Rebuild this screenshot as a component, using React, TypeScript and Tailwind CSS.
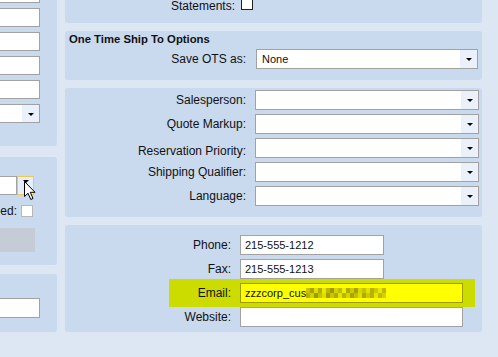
import React from "react";

const panel = "bg-[#c9d9ee] rounded-[3px]";
const field = "h-[20px] bg-white border border-[#a2a2a2]";

function Arrow() {
  return (
    <span className="w-0 h-0 mt-[1px] border-l-[3px] border-r-[3px] border-t-[3px] border-l-transparent border-r-transparent border-t-black" />
  );
}

function Select({ value = "", width }: { value?: string; width: string }) {
  return (
    <div className={`${field} ${width} flex items-stretch`}>
      <span className="flex-1 pl-[5px] text-[11px] leading-[18px]">{value}</span>
      <span className="w-[17px] bg-[#eaf1fb] flex items-center justify-center">
        <Arrow />
      </span>
    </div>
  );
}

function Row({ label, low, children }: { label: string; low?: boolean; children: React.ReactNode }) {
  return (
    <div className="flex items-center h-[20px]">
      <span className={`w-[181px] text-right whitespace-nowrap ${low ? "mt-[6px]" : ""}`}>{label}</span>
      <div className="ml-[9px]">{children}</div>
    </div>
  );
}

function Contact({ label, value = "", width }: { label: string; value?: string; width: string }) {
  return (
    <div className="flex items-center h-[20px]">
      <span className="w-[166px] text-right">{label}</span>
      <div className={`${field} ${width} ml-[9px] pl-[4px] text-[11px] leading-[18px]`}>{value}</div>
    </div>
  );
}

// mosaic used to hide part of the email address
const blurTop = ["#c9c400", "#a9a500", "#dede00", "#b3ae00", "#e8e800", "#bdb800", "#9f9b00", "#d7d200", "#c2bd00", "#eeee00", "#b0ab00", "#d0cb00", "#a6a200", "#dcd700", "#c5c000", "#e2e200", "#b7b200", "#cfca00", "#e9e900", "#c0bb00"];
const blurBottom = ["#b6b100", "#d4cf00", "#9c9800", "#c7c200", "#dddd00", "#a4a000", "#cbc600", "#b1ac00", "#e4e400", "#bab500", "#d9d400", "#a8a400", "#c3be00", "#e0e000", "#aeaa00", "#cdc800", "#b9b400", "#e6e600", "#c0bb00", "#d5d000"];

function Cursor() {
  return (
    <svg className="absolute left-[24px] top-[5px]" width="13" height="20" viewBox="0 0 13 20">
      <path d="M0.5 0.5 L0.5 15.5 L4 12.2 L6.8 18.5 L9 17.5 L6.3 11.3 L11 11.3 Z" fill="white" stroke="black" strokeWidth="1" strokeLinejoin="miter" />
    </svg>
  );
}

export default function App() {
  return (
    <div
      className="w-[498px] h-[357px] overflow-hidden bg-[#dde7f4] flex items-start text-[12px] text-[#111] leading-[14px]"
      style={{ fontFamily: '"Liberation Sans", Arial, sans-serif' }}
    >
      {/* left column */}
      <div className="w-[57px] -mt-[20px] flex flex-col">
        <div className={`${panel} rounded-l-none pt-[4px] pb-[23px] pr-[17px] flex flex-col gap-[5px]`}>
          {[0, 1, 2, 3, 4].map((i) => (
            <div key={i} className="h-[19px] w-[40px] bg-white border border-l-0 border-[#a2a2a2]" />
          ))}
          <div className="h-[19px] w-[40px] bg-white border border-l-0 border-[#a2a2a2] flex justify-end">
            <span className="w-[17px] bg-[#eaf1fb] flex items-center justify-center">
              <Arrow />
            </span>
          </div>
        </div>

        <div className={`${panel} rounded-l-none mt-[11px] pt-[19px] pb-[13px]`}>
          <div className="relative h-[19px] w-[34px] flex">
            <div className="flex-1 bg-white border border-l-0 border-[#a2a2a2]" />
            <span className="w-[17px] bg-[#e6eef9] border border-[#f0c850] flex items-start justify-center pt-[2px]">
              <Arrow />
            </span>
            <Cursor />
          </div>
          <div className="mt-[10px] flex items-center h-[12px]">
            <span className="w-[17px] text-right whitespace-nowrap">ed:</span>
            <span className="ml-[4px] w-[12px] h-[12px] bg-white border border-[#b8b8b8]" />
          </div>
          <div className="mt-[11px] h-[24px] w-[35px] bg-[#c6ccd6]" />
        </div>

        <div className={`${panel} rounded-l-none mt-[9px] pt-[24px] pb-[14px] pr-[17px]`}>
          <div className="h-[20px] w-[40px] bg-white border border-l-0 border-[#a2a2a2]" />
        </div>
      </div>

      {/* right column */}
      <div className="ml-[8px] w-[417px] -mt-[10px] flex flex-col gap-[8px]">
        <div className={`${panel} pt-[9px] pb-[10px]`}>
          <div className="flex items-start h-[14px]">
            <span className="w-[170px] text-right">Statements:</span>
            <span className="ml-[6px] -mt-[2px] w-[12px] h-[13px] bg-white border border-[#222]" />
          </div>
        </div>

        <div className={`${panel} pt-[1px] pb-[11px]`}>
          <div className="pl-[4px] font-bold text-[11.3px] h-[14px]">One Time Ship To Options</div>
          <div className="mt-[3px] flex items-center h-[20px]">
            <span className="w-[181px] text-right">Save OTS as:</span>
            <div className="ml-[10px]">
              <Select value="None" width="w-[222px]" />
            </div>
          </div>
        </div>

        <div className={`${panel} pt-[2px] pb-[11px] flex flex-col gap-[4px]`}>
          <Row label="Salesperson:">
            <Select width="w-[224px]" />
          </Row>
          <Row label="Quote Markup:">
            <Select width="w-[224px]" />
          </Row>
          <Row label="Reservation Priority:" low>
            <Select width="w-[224px]" />
          </Row>
          <Row label="Shipping Qualifier:">
            <Select width="w-[224px]" />
          </Row>
          <Row label="Language:">
            <Select width="w-[224px]" />
          </Row>
        </div>

        <div className={`${panel} pt-[10px] pb-[5px] flex flex-col gap-[4px]`}>
          <Contact label="Phone:" value="215-555-1212" width="w-[144px]" />
          <Contact label="Fax:" value="215-555-1213" width="w-[144px]" />
          <div className="-my-[4px] py-[4px] ml-[104px] w-[306px] bg-[#cddc00] flex items-center">
            <span className="w-[62px] text-right">Email:</span>
            <div className="ml-[9px] w-[223px] h-[20px] bg-[#ffff00] border border-[#9c9c00] pl-[4px] flex items-center text-[11px]">
              <span>zzzcorp_cus</span>
              <span className="flex flex-col">
                <span className="flex">
                  {blurTop.map((c, i) => (
                    <span key={i} className="w-[4px] h-[5px]" style={{ backgroundColor: c }} />
                  ))}
                </span>
                <span className="flex">
                  {blurBottom.map((c, i) => (
                    <span key={i} className="w-[4px] h-[5px]" style={{ backgroundColor: c }} />
                  ))}
                </span>
              </span>
            </div>
          </div>
          <Contact label="Website:" width="w-[223px]" />
        </div>
      </div>
    </div>
  );
}
